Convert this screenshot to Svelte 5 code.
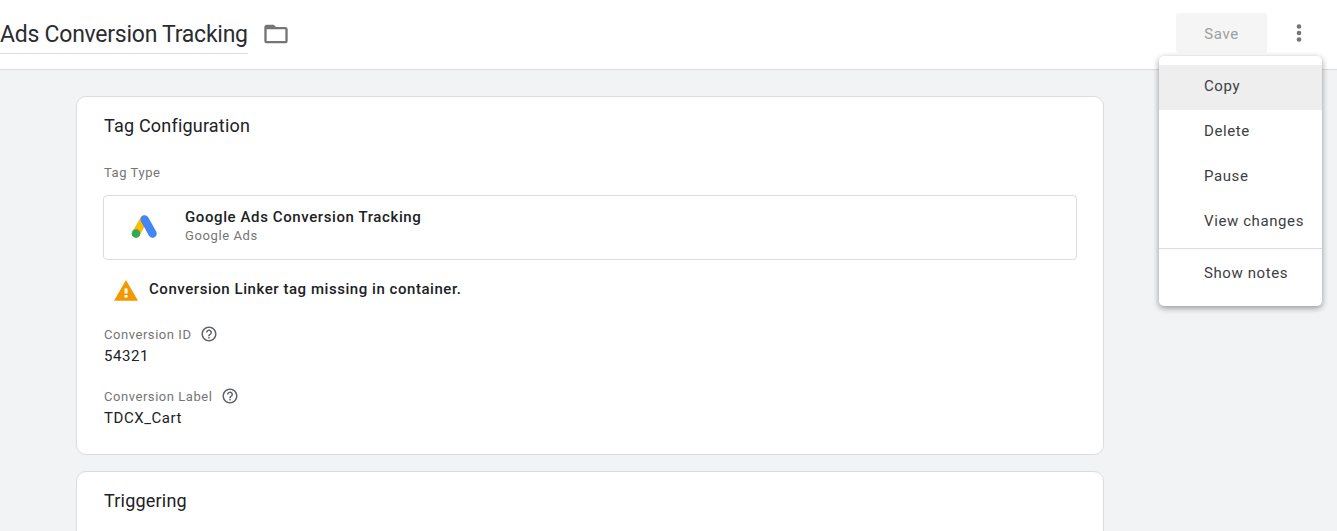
<script>
	const menuItems = ['Copy', 'Delete', 'Pause', 'View changes'];
</script>

<div class="page">
	<header class="topbar">
		<div class="title-wrap">
			<h1 class="title">Ads Conversion Tracking</h1>
		</div>
		<svg class="folder" viewBox="0 0 24 24" width="28" height="28" aria-hidden="true">
			<path d="M20 6h-8l-2-2H4c-1.100 0-2 .9-2 2v12c0 1.100.9 2 2 2h16c1.100 0 2-.9 2-2V8c0-1.100-.9-2-2-2zm0 12H4V8h16v10z" />
		</svg>
		<div class="actions">
			<button class="save">Save</button>
			<svg class="more" viewBox="0 0 24 24" width="24" height="24" aria-hidden="true">
				<circle cx="12" cy="5.500" r="2.300" />
				<circle cx="12" cy="12" r="2.300" />
				<circle cx="12" cy="18.500" r="2.300" />
			</svg>
		</div>
	</header>

	<main class="content">
		<section class="card config">
			<h2>Tag Configuration</h2>
			<div class="label type-label">Tag Type</div>
			<div class="tag-type">
				<svg class="ads-logo" viewBox="0 0 28 26" width="28" height="26" aria-hidden="true">
					<path d="M13 4.500 L5 18.500" stroke="#fbbc04" stroke-width="8" stroke-linecap="round" fill="none" />
					<path d="M13.700 4.500 L21.500 18.500" stroke="#4285f4" stroke-width="8.400" stroke-linecap="round" fill="none" />
					<circle cx="5" cy="18.500" r="4.300" fill="#34a853" />
				</svg>
				<div class="tag-text">
					<div class="tag-name">Google Ads Conversion Tracking</div>
					<div class="tag-vendor">Google Ads</div>
				</div>
			</div>
			<div class="warning">
				<svg class="warn-icon" viewBox="0 0 26 22" width="26" height="22" aria-hidden="true">
					<path d="M13 1 25 21.700H1z" fill="#f29900" />
					<rect x="11.500" y="9.500" width="3" height="5" fill="#fff" />
					<rect x="11.500" y="16" width="3" height="2.600" fill="#fff" />
				</svg>
				<span>Conversion Linker tag missing in container.</span>
			</div>
			<div class="field">
				<div class="label">Conversion ID
					<svg class="help" viewBox="0 0 24 24" width="18" height="18" aria-hidden="true">
						<path d="M11 18h2v-2h-2v2zm1-16C6.480 2 2 6.480 2 12s4.480 10 10 10 10-4.480 10-10S17.520 2 12 2zm0 18c-4.410 0-8-3.590-8-8s3.590-8 8-8 8 3.590 8 8-3.590 8-8 8zm0-14c-2.210 0-4 1.790-4 4h2c0-1.100.9-2 2-2s2 .9 2 2c0 2-3 1.750-3 5h2c0-2.250 3-2.500 3-5 0-2.210-1.790-4-4-4z" />
					</svg>
				</div>
				<div class="value">54321</div>
			</div>
			<div class="field">
				<div class="label">Conversion Label
					<svg class="help" viewBox="0 0 24 24" width="18" height="18" aria-hidden="true">
						<path d="M11 18h2v-2h-2v2zm1-16C6.480 2 2 6.480 2 12s4.480 10 10 10 10-4.480 10-10S17.520 2 12 2zm0 18c-4.410 0-8-3.590-8-8s3.590-8 8-8 8 3.590 8 8-3.590 8-8 8zm0-14c-2.210 0-4 1.790-4 4h2c0-1.100.9-2 2-2s2 .9 2 2c0 2-3 1.750-3 5h2c0-2.250 3-2.500 3-5 0-2.210-1.790-4-4-4z" />
					</svg>
				</div>
				<div class="value">TDCX_Cart</div>
			</div>
		</section>

		<section class="card triggering">
			<h2>Triggering</h2>
		</section>
	</main>

	<nav class="menu">
		{#each menuItems as item, i}
			<div class="menu-item" class:active={i === 0}>{item}</div>
		{/each}
		<div class="divider"></div>
		<div class="menu-item notes">Show notes</div>
	</nav>
</div>

<style>
	:global(body) {
		margin: 0;
		background: #f1f3f4;
	}

	.page {
		position: relative;
		height: 531px;
		overflow: hidden;
		font-family: Roboto, "Liberation Sans", sans-serif;
		color: #202124;
		background: #f1f3f4;
	}

	.topbar {
		display: flex;
		align-items: flex-start;
		height: 69px;
		background: #fff;
		border-bottom: 1px solid #dadce0;
	}

	.title-wrap {
		width: 248px;
		height: 53px;
		margin-bottom: 16px;
		border-bottom: 1px solid #dadce0;
		display: flex;
		align-items: center;
	}

	.title {
		margin: 16px 0 0 0;
		font-size: 23px;
		font-weight: 400;
		letter-spacing: -0.25px;
		color: #2b2c2f;
		white-space: nowrap;
	}

	.folder {
		margin: 20px 0 0 14px;
		fill: #757575;
	}

	.actions {
		margin-left: auto;
		display: flex;
		align-items: center;
		padding: 13px 26px 0 0;
		gap: 20px;
	}

	.save {
		width: 91px;
		height: 40px;
		padding: 1px 0 0;
		border: 0;
		border-radius: 3px;
		background: #f5f5f5;
		color: #9e9e9e;
		font: 400 15px Roboto, sans-serif;
		letter-spacing: 0.6px;
	}

	.more {
		fill: #757575;
	}

	.content {
		display: flex;
		flex-direction: column;
		gap: 16px;
		width: 1028px;
		padding: 26px 0 0 76px;
	}

	.card {
		box-sizing: border-box;
		background: #fff;
		border: 1px solid #dadce0;
		border-radius: 10px;
		padding: 17px 26px 0 27px;
		flex: none;
	}

	.config {
		height: 359px;
	}

	.triggering {
		height: 100px;
	}

	h2 {
		margin: 0;
		font-size: 18px;
		font-weight: 400;
		line-height: 24px;
		letter-spacing: 0.2px;
	}

	.label {
		display: flex;
		align-items: center;
		gap: 9px;
		height: 18px;
		font-size: 13px;
		letter-spacing: 0.55px;
		color: #757575;
	}

	.type-label {
		margin-top: 25px;
	}

	.tag-type {
		display: flex;
		align-items: center;
		height: 63px;
		margin: 14px 0 0 -1px;
		border: 1px solid #dadce0;
		border-radius: 4px;
		padding-left: 27px;
	}

	.tag-text {
		margin-left: 26px;
		padding-bottom: 4px;
	}

	.tag-name {
		font-size: 15px;
		font-weight: 500;
		letter-spacing: 0.6px;
		line-height: 20px;
	}

	.tag-vendor {
		font-size: 13px;
		letter-spacing: 0.6px;
		line-height: 17px;
		color: #757575;
	}

	.warning {
		display: flex;
		align-items: center;
		gap: 10px;
		height: 24px;
		margin: 17px 0 0 9px;
		font-size: 15px;
		font-weight: 500;
		letter-spacing: 0.55px;
	}

	.warn-icon {
		margin-top: 2px;
	}

	.field {
		margin-top: 21px;
	}

	.warning + .field {
		margin-top: 24px;
	}

	.value {
		margin-top: 3px;
		font-size: 15px;
		line-height: 20px;
		letter-spacing: 0.55px;
	}

	.help {
		fill: #5f6368;
	}

	.menu {
		position: absolute;
		top: 56px;
		left: 1159px;
		width: 163px;
		height: 250px;
		box-sizing: border-box;
		padding-top: 9px;
		background: #fff;
		border-radius: 5px;
		box-shadow: 0 2px 6px rgba(0, 0, 0, 0.4);
	}

	.menu-item {
		display: flex;
		align-items: center;
		box-sizing: border-box;
		height: 45px;
		padding: 0 0 4px 45px;
		font-size: 15px;
		letter-spacing: 0.6px;
		color: #3c4043;
		white-space: nowrap;
	}

	.active {
		background: #eeeeee;
	}

	.divider {
		height: 1px;
		margin-top: 3px;
		background: #dadce0;
	}

	.notes {
		margin-top: 1px;
		padding-bottom: 0;
	}
</style>
